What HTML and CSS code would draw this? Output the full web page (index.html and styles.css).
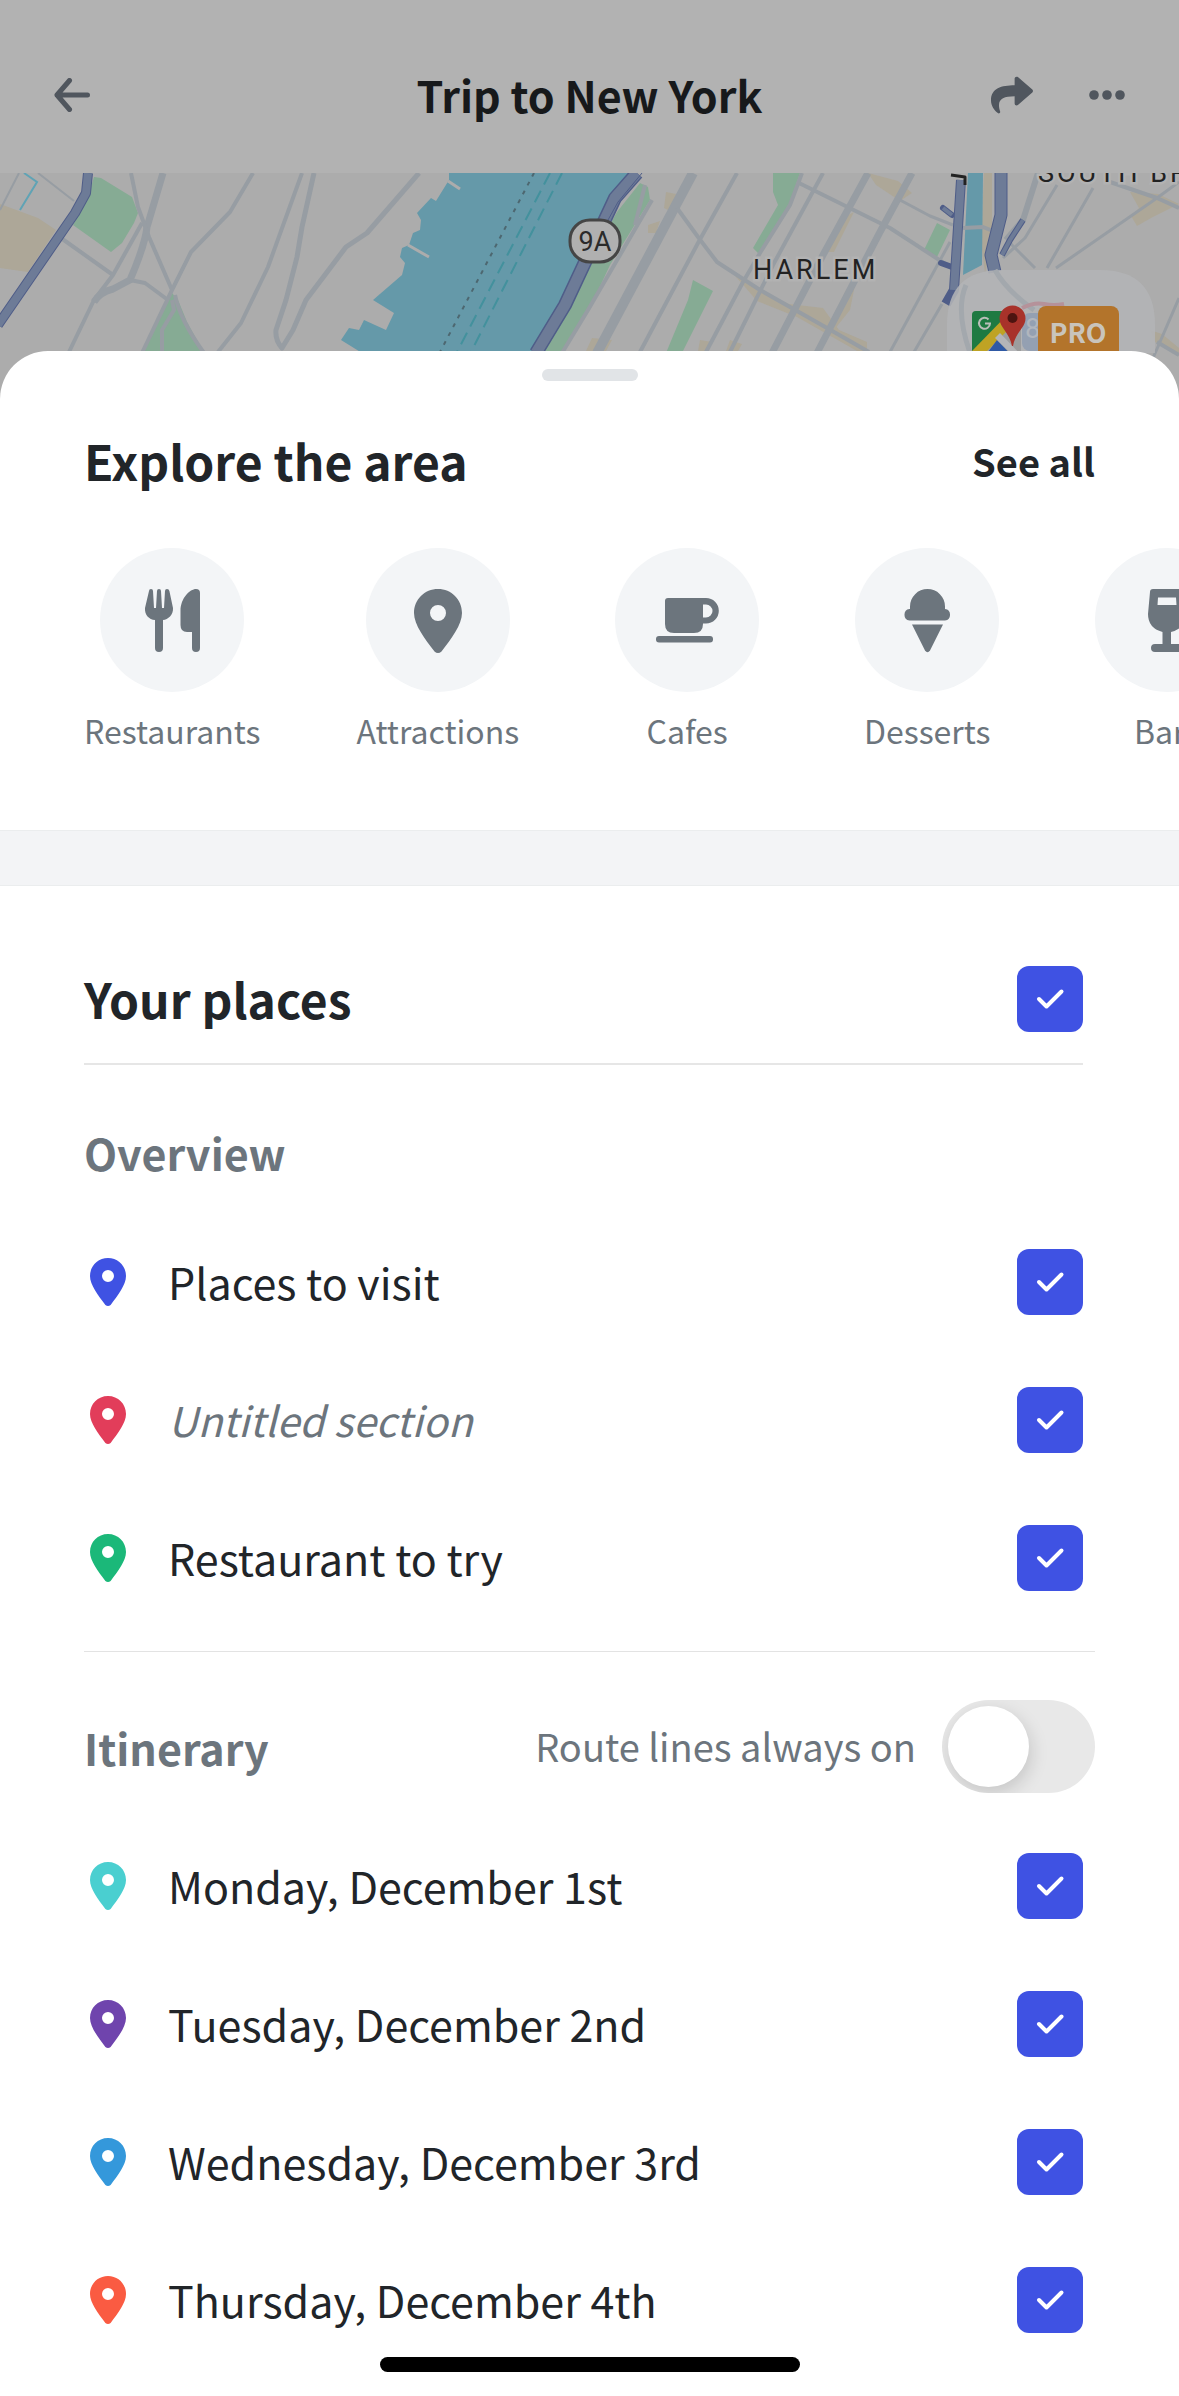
FILE: index.html
```html
<!DOCTYPE html>
<html lang="en">
<head>
<meta charset="utf-8">
<meta name="viewport" content="width=device-width, initial-scale=1">
<title>Trip to New York</title>
<link rel="stylesheet" href="styles.css">
</head>
<body>
<svg class="defs" aria-hidden="true">
  <symbol id="pin" viewBox="0 0 48 64">
    <path fill-rule="evenodd" d="M24 0C37.500 0 48 10.500 48 24C48 36 37 50 27.500 62.500Q24 65.500 20.500 62.500C11 50 0 36 0 24C0 10.500 10.500 0 24 0ZM24 16a8 8 0 1 0 0 16a8 8 0 1 0 0-16Z"/>
  </symbol>
</svg>

<header class="topbar">
  <button class="icon-button" aria-label="Back">
    <svg width="36" height="34" viewBox="0 0 36 34" fill="none" stroke="currentColor" stroke-width="5" stroke-linecap="round" stroke-linejoin="round"><path d="M33.500 17H3M15.500 2.500L3 17l12.500 14.500"/></svg>
  </button>
  <h1 class="topbar-title">Trip to New York</h1>
  <div class="topbar-actions">
    <button class="icon-button" aria-label="Share">
      <svg width="42" height="38" viewBox="0 32 512 448" fill="currentColor"><path d="M503.691 189.836L327.687 37.851C312.281 24.546 288 35.347 288 56.015v80.053C127.371 137.907 0 170.100 0 322.326c0 61.441 39.581 122.309 83.333 154.132 13.653 9.931 33.111-2.533 28.077-18.631C66.066 312.814 132.917 274.316 288 272.085V360c0 20.700 24.300 31.453 39.687 18.164l176.004-152c11.071-9.562 11.086-26.753 0-36.328z"/></svg>
    </button>
    <button class="icon-button" aria-label="More">
      <svg width="36" height="10" viewBox="0 0 36 10" fill="currentColor"><circle cx="5" cy="5" r="4.800"/><circle cx="18" cy="5" r="4.800"/><circle cx="31" cy="5" r="4.800"/></svg>
    </button>
  </div>
</header>

<svg class="map" viewBox="0 173 1179 240" preserveAspectRatio="xMidYMin slice" role="img" aria-label="Map of Harlem">
  <rect y="173" width="1179" height="240" fill="#acacac"/>
  <g fill="#ada798">
    <path d="M0 204L38 218L56 230L28 272L0 268Z"/>
    <path d="M666 192l10 2-4 18-8-4zM648 225l12-4-4 12-8 0zM592 338l20 2-6 11h-20z"/>
    <path d="M735 276l24 14 30 14 34 4 16 22 28 12v9h-10l-60-34-40-16-12-14z"/>
    <path d="M846 290l10-10-6 30-16 20-6-4zM838 220l16-8-20 40-6 0zM868 173l30 8 14 12-12 8-24-16zM700 340l12 2-4 9h-10zM730 340l12 4-4 7h-12z"/>
    <path d="M1130 192l28 2 21 10-28 14-14 8-6-10 8-8zM1150 330l12 4 17 14v8l-24-14zM984 173l8 0 0 70-7 30-4-30z"/>
  </g>
  <g fill="#86ab94">
    <path d="M94 177L101 178L132 197L138 213L134 223L122 243L111 252L73 225L88 197Z"/>
    <path d="M172 293L142 353H204L187 322L178 300Z"/>
    <path d="M640 183L648 187L650 200L610 265L588 312L563 353H542L587 265L617 212Z"/>
    <path d="M773 173H800L790 202L760 255L753 248L778 205L773 192Z"/>
    <path d="M693 280L713 291L682 353H666L688 300Z"/>
    <path d="M937 223L950 230L937 257L924 250Z"/>
  </g>
  <g fill="#6599a9">
    <path d="M449 173L449 180L436 201L431 198L417 213L421 220L420 230L413 233L409 245L402 248L400 257L405 263L402 275L373 300L394 313L386 330L364 320L359 330L349 328L341 340L362 353H536L560 310L615 198L630 173Z"/>
    <path d="M968 173H983L982 265L963 275Z"/>
  </g>
  <path d="M448 181l12 8M408 245l21 12" stroke="#acacac" stroke-width="3"/>
  <g fill="none" stroke="#979da3" stroke-linejoin="round" stroke-width="4">
    <path stroke-width="7" d="M163 173L147 227Q145 245 130 280L113 289Q100 292 94 302"/>
    <path d="M131 173L138 207L149 237L172 290M253 173L230 212L191 252L172 290L142 353M142 223L113 275L94 300L69 352M61 238L113 275M130 280L145 283L168 300M175 295Q180 320 204 353M172 300L174 310L162 330V353"/>
    <path d="M302 173L268 267L241 323L218 352"/>
    <path stroke-width="5" d="M314 173L302 227L297 257L286 300L276 330Q275 340 282 348L293 330L306 300L346 247L367 233L419 173"/>
    <path stroke-width="2" d="M19 173L0 210M38 173L74 201"/>
    <path stroke-width="10" d="M693 173L597 353"/>
    <path d="M645 185L635 225M652 200L588 310L562 353M737 173L698 243L640 352M677 208L698 237L717 262L760 290L827 328L869 352M797 182L890 228L947 265M823 173L773 265L730 352M802 173L790 205L760 253L743 282L706 352"/>
    <path stroke-width="7" d="M868 173L823 255L772 353M912 173L880 232L817 353"/>
    <path stroke-width="3" d="M900 200L930 216L953 225M950 242L890 352M942 304L914 352M1057 185L1025 238L1003 258M1093 188L1047 268M1179 182L1157 198L1056 268M1007 240L1035 268M1179 298L1150 365"/>
    <path d="M1110 182L1157 198L1179 208M1157 342L1179 355M963 228L983 227L993 231"/>
    <path stroke-width="6" d="M1038 173L1023 220L1006 240"/>
  </g>
  <g fill="none" stroke-width="2">
    <path d="M534 173L440 352" stroke="#4d6770" stroke-dasharray="4 6"/>
    <path d="M550 173L457 352M562 173L471 352" stroke="#43919d" stroke-dasharray="13 7"/>
    <path d="M24 173L37 182L20 210" stroke="#5fa3b5"/>
  </g>
  <g fill="none" stroke-linejoin="round">
    <g stroke="#4f5d88" stroke-width="10">
      <path d="M88 173L86 193L75 213L-2 325"/>
      <path stroke-width="14" d="M637 173L615 198L565 305L536 353"/>
      <path d="M961 180L954 290L946 304" />
      <path stroke-width="13" d="M1001 173L1001 215L991 255L995 272"/>
      <path stroke-width="6" stroke-linecap="round" d="M943 208L952 215M941 263L952 267"/>
      <path stroke-width="6" d="M1023 220L1010 240L1002 255"/>
    </g>
    <g stroke="#6d7b97" stroke-width="8">
      <path d="M88 173L86 193L75 213L-2 325"/>
      <path stroke-width="11" d="M637 173L615 198L565 305L536 353"/>
      <path d="M961 180L954 290"/>
      <path stroke-width="11" d="M1001 173L1001 215L991 255L995 272"/>
      <path stroke-width="4" d="M1023 220L1010 240L1002 255M943 208L952 215"/>
    </g>
    <path d="M642 173L618 202L608 220" stroke="#4f5d88" stroke-width="1"/>
    <path d="M951 175l14 2v8" stroke="#222" stroke-width="3"/>
  </g>
  <rect x="570" y="220" width="50" height="42" rx="20" fill="#b0b0b0" stroke="#454545" stroke-width="3"/>
  <text class="map-label" x="595" y="251" text-anchor="middle">9A</text>
  <text class="map-label map-area" x="753" y="279">HARLEM</text>
  <text class="map-label map-area" x="1038" y="182">SOUTH BRONX</text>

  <path d="M947 353V325Q947 270 1002 270H1100Q1155 270 1155 325V353Z" fill="#b3b4b6" fill-opacity=".88"/>
  <path d="M995 270Q1006 290 1034 310M966 285Q955 310 970 353" fill="none" stroke="#a3a8ad" stroke-width="5"/>
  <path d="M1022 308q12-6 22-4t20 0" fill="none" stroke="#b5929a" stroke-width="4"/>
  <rect x="1022" y="313" width="26" height="38" rx="8" fill="#94a0b2"/>
  <text class="map-label map-route" x="1025" y="338">8</text>
  <g>
    <rect x="972" y="311" width="49" height="49" rx="4" fill="#9c9d9e"/>
    <path d="M976 311h45l-49 49v-45q0-4 4-4z" fill="#1e7a42"/>
    <path d="M972 360v-9l37-38 8 8-39 39z" fill="#bfa324"/>
    <path d="M982 360l15-20 19 20z" fill="#2f59a4"/>
    <path d="M995 338l5-5 23 24v8z" fill="#b4b5b8"/>
    <path d="M988.500 319.500a5.500 5.500 0 1 0 1.500 4h-5" fill="none" stroke="#b9beb9" stroke-width="2"/>
    <path d="M1012.500 305.500a13 13 0 0 1 13 13c0 9-10 14-12.500 27.500h-1c-2.500-13.500-12.500-18.500-12.500-27.500a13 13 0 0 1 13-13z" fill="#a8322a"/>
    <circle cx="1012.500" cy="318" r="5" fill="#4d1410"/>
  </g>
  <rect x="1038" y="306" width="81" height="60" rx="8" fill="#b3742b"/>
  <text class="map-pro" x="1078" y="343" text-anchor="middle">PRO</text>
</svg>

<main class="sheet">
  <div class="handle"></div>

  <section class="explore">
    <div class="explore-head">
      <h2 class="heading">Explore the area</h2>
      <a class="see-all" href="#all">See all</a>
    </div>
    <div class="categories">
      <button class="category">
        <span class="category-icon"><svg viewBox="0 0 72 72"><path d="M13 7Q13 5 15 5Q17 5 17 7L18 24H20L21 7Q21 5 23 5Q25 5 25 7L26 24H28L29 7Q29 5 31 5Q33 5 33.400 7L37 24C37.500 31 32 35.500 27 36V64a4 4 0 0 1-8 0V36C13 35.500 8.500 31 9 24Z"/><path d="M60 5q4 0 4 4V64a4 4 0 0 1-8 0V48H51q-6.500 0-6.500-7V27C44.500 14 54 5 60 5z"/></svg></span>
        Restaurants
      </button>
      <button class="category">
        <span class="category-icon"><svg viewBox="0 0 72 72"><use href="#pin" x="12" y="5" width="48" height="64"/></svg></span>
        Attractions
      </button>
      <button class="category">
        <span class="category-icon"><svg viewBox="0 0 72 72"><path fill-rule="evenodd" d="M17 14H55a12.800 12.800 0 0 1 0 25.600H52V40q0 9-9 9H23q-9 0-9-9V17q0-3 3-3zM52 20.500V33.500H55a6.500 6.500 0 0 0 0-13z"/><rect x="5" y="52" width="57" height="6.500" rx="3"/></svg></span>
        Cafes
      </button>
      <button class="category">
        <span class="category-icon"><svg viewBox="0 0 72 72"><path d="M19 25V22.500a17.500 17.500 0 0 1 35 0V25a5.800 5.800 0 0 1 0 11.500H18.500a5.800 5.800 0 0 1 0-11.500z"/><path d="M21 40.500H52L39 66.500Q36.500 70 34 66.500z"/></svg></span>
        Desserts
      </button>
      <button class="category">
        <span class="category-icon"><svg viewBox="0 0 72 72"><path fill-rule="evenodd" d="M22 5H50q3 0 3 3L55 30Q55 44 40 48V60H48a4 4 0 0 1 0 8H24a4 4 0 0 1 0-8H31.500V48Q17 44 17 30L19 8q0-3 3-3zM27 13.500L26.500 21H45.500L45 13.500z"/></svg></span>
        Bars
      </button>
    </div>
  </section>

  <div class="band"></div>

  <section class="places">
    <label class="places-head">
      <h2 class="heading">Your places</h2>
      <input class="check" type="checkbox" checked>
    </label>

    <h3 class="subheading overview">Overview</h3>
    <ul class="rows">
      <li><label class="row"><svg class="row-pin blue"><use href="#pin"/></svg><span class="row-text">Places to visit</span><input class="check" type="checkbox" checked></label></li>
      <li><label class="row"><svg class="row-pin red"><use href="#pin"/></svg><span class="row-text untitled">Untitled section</span><input class="check" type="checkbox" checked></label></li>
      <li><label class="row"><svg class="row-pin green"><use href="#pin"/></svg><span class="row-text">Restaurant to try</span><input class="check" type="checkbox" checked></label></li>
    </ul>

    <div class="itinerary-head">
      <h3 class="subheading">Itinerary</h3>
      <label class="route"><span class="route-text">Route lines always on</span><input class="toggle" type="checkbox" role="switch"></label>
    </div>
    <ul class="rows">
      <li><label class="row"><svg class="row-pin teal"><use href="#pin"/></svg><span class="row-text">Monday, December 1st</span><input class="check" type="checkbox" checked></label></li>
      <li><label class="row"><svg class="row-pin purple"><use href="#pin"/></svg><span class="row-text">Tuesday, December 2nd</span><input class="check" type="checkbox" checked></label></li>
      <li><label class="row"><svg class="row-pin sky"><use href="#pin"/></svg><span class="row-text">Wednesday, December 3rd</span><input class="check" type="checkbox" checked></label></li>
      <li><label class="row"><svg class="row-pin orange"><use href="#pin"/></svg><span class="row-text">Thursday, December 4th</span><input class="check" type="checkbox" checked></label></li>
    </ul>
  </section>
</main>
<div class="home-indicator"></div>
</body>
</html>
```
FILE: styles.css
```css
* {
  box-sizing: border-box;
}

body,
h1,
h2,
h3,
ul {
  margin: 0;
  padding: 0;
}

body {
  background: #fff;
  color: #212529;
  font-family: "Noto Sans CJK SC", "Noto Sans", sans-serif;
}

button {
  padding: 0;
  border: 0;
  background: none;
  font: inherit;
  color: inherit;
}

svg {
  display: block;
}

.defs {
  position: absolute;
  width: 0;
  height: 0;
}

.topbar {
  display: grid;
  grid-template-columns: 1fr auto 1fr;
  align-items: center;
  padding: 65px 54px 48px;
  background: #b2b2b2;
}

.topbar-title {
  padding-bottom: 2px;
  font-size: 43px;
  line-height: 58px;
  font-weight: 700;
  color: #17191b;
}

.topbar-actions {
  display: flex;
  justify-content: flex-end;
  align-items: center;
  gap: 56px;
}

.icon-button {
  color: #50565e;
}

.map {
  width: 100%;
  height: 240px;
}

.map-label {
  font-family: Roboto, sans-serif;
  font-size: 27px;
  fill: #2b2b2b;
}

.map-area {
  letter-spacing: 3px;
  fill: #222;
  stroke: #b2b2b2;
  stroke-width: 5px;
  paint-order: stroke;
}

.map-route {
  fill: #b0b5bd;
}

.map-pro {
  font-size: 27px;
  font-weight: 700;
  fill: #c9c4bc;
}

.sheet {
  position: relative;
  margin-top: -62px;
  padding: 18px 0 27px;
  border-radius: 48px 48px 0 0;
  background: #fff;
}

.handle {
  width: 96px;
  height: 12px;
  margin: 0 auto;
  border-radius: 6px;
  background: #e1e4e7;
}

.heading {
  padding-bottom: 2px;
  font-size: 48px;
  line-height: 60px;
  font-weight: 700;
}

.subheading {
  font-size: 43px;
  line-height: 60px;
  font-weight: 700;
  color: #6c757d;
}

.explore {
  padding: 49px 0 76px;
}

.explore-head {
  display: flex;
  justify-content: space-between;
  align-items: center;
  padding: 0 84px;
}

.see-all {
  font-size: 38px;
  line-height: 60px;
  font-weight: 700;
  color: inherit;
  text-decoration: none;
}

.categories {
  display: flex;
  gap: 96px;
  margin-top: 56px;
  padding-left: 84px;
  overflow-x: auto;
  scrollbar-width: none;
}

.category {
  flex: none;
  display: flex;
  flex-direction: column;
  align-items: center;
  gap: 14px;
  font-size: 32px;
  line-height: 48px;
  color: #6c757d;
}

.category-icon {
  width: 144px;
  height: 144px;
  padding: 36px;
  border-radius: 50%;
  background: #f3f5f7;
  fill: #6c757d;
}

.band {
  height: 56px;
  border: solid #ebedee;
  border-width: 1px 0;
  background: #f3f4f6;
}

.places {
  padding: 80px 84px 0;
}

.places-head {
  display: flex;
  justify-content: space-between;
  align-items: center;
  margin-right: 12px;
  padding-bottom: 31px;
  border-bottom: 2px solid #e6e6e6;
}

.overview {
  margin: 57px 0 31px;
}

.rows {
  list-style: none;
}

.row {
  display: flex;
  align-items: center;
  height: 138px;
  padding: 0 12px 0 6px;
}

.row-pin {
  width: 36px;
  height: 48px;
  margin-right: 42px;
  fill: currentColor;
}

.blue { color: #3f52e3; }
.red { color: #e23d5a; }
.green { color: #1bb879; }
.teal { color: #4acfd0; }
.purple { color: #6f44ad; }
.sky { color: #3498db; }
.orange { color: #fa5b42; }

.row-text {
  flex: 1;
  padding-bottom: 2px;
  font-size: 43px;
  line-height: 60px;
}

.untitled {
  font-size: 41px;
  font-style: italic;
  color: #6c757d;
}

.check {
  appearance: none;
  width: 66px;
  height: 66px;
  margin: 0;
  border: 3px solid #ced4da;
  border-radius: 12px;
}

.check:checked {
  border: 0;
  background: #3f52e3 url("data:image/svg+xml,%3Csvg xmlns='http://www.w3.org/2000/svg' viewBox='0 0 66 66'%3E%3Cpath d='M22 33l7.500 7.500L44.500 25.500' fill='none' stroke='white' stroke-width='4' stroke-linecap='round' stroke-linejoin='round'/%3E%3C/svg%3E");
}

.itinerary-head {
  display: flex;
  justify-content: space-between;
  align-items: center;
  margin: 24px 0;
  padding-top: 48px;
  border-top: 1px solid #e3e3e3;
}

.route {
  display: flex;
  align-items: center;
  gap: 26px;
  color: #6c757d;
}

.route-text {
  padding-bottom: 2px;
  font-size: 38px;
  line-height: 60px;
}

.toggle {
  appearance: none;
  width: 153px;
  height: 93px;
  margin: 0;
  padding: 6px;
  border-radius: 47px;
  background: #e8e8e8;
  overflow: hidden;
}

.toggle::before {
  content: "";
  display: block;
  width: 81px;
  height: 81px;
  border-radius: 50%;
  background: #fff;
  box-shadow: 2px 6px 18px rgba(0, 0, 0, 0.15);
}

.toggle:checked {
  padding-left: 66px;
  background: #3f52e3;
}

.home-indicator {
  position: fixed;
  bottom: 24px;
  left: 50%;
  width: 420px;
  height: 15px;
  margin-left: -210px;
  border-radius: 8px;
  background: #000;
}
```
